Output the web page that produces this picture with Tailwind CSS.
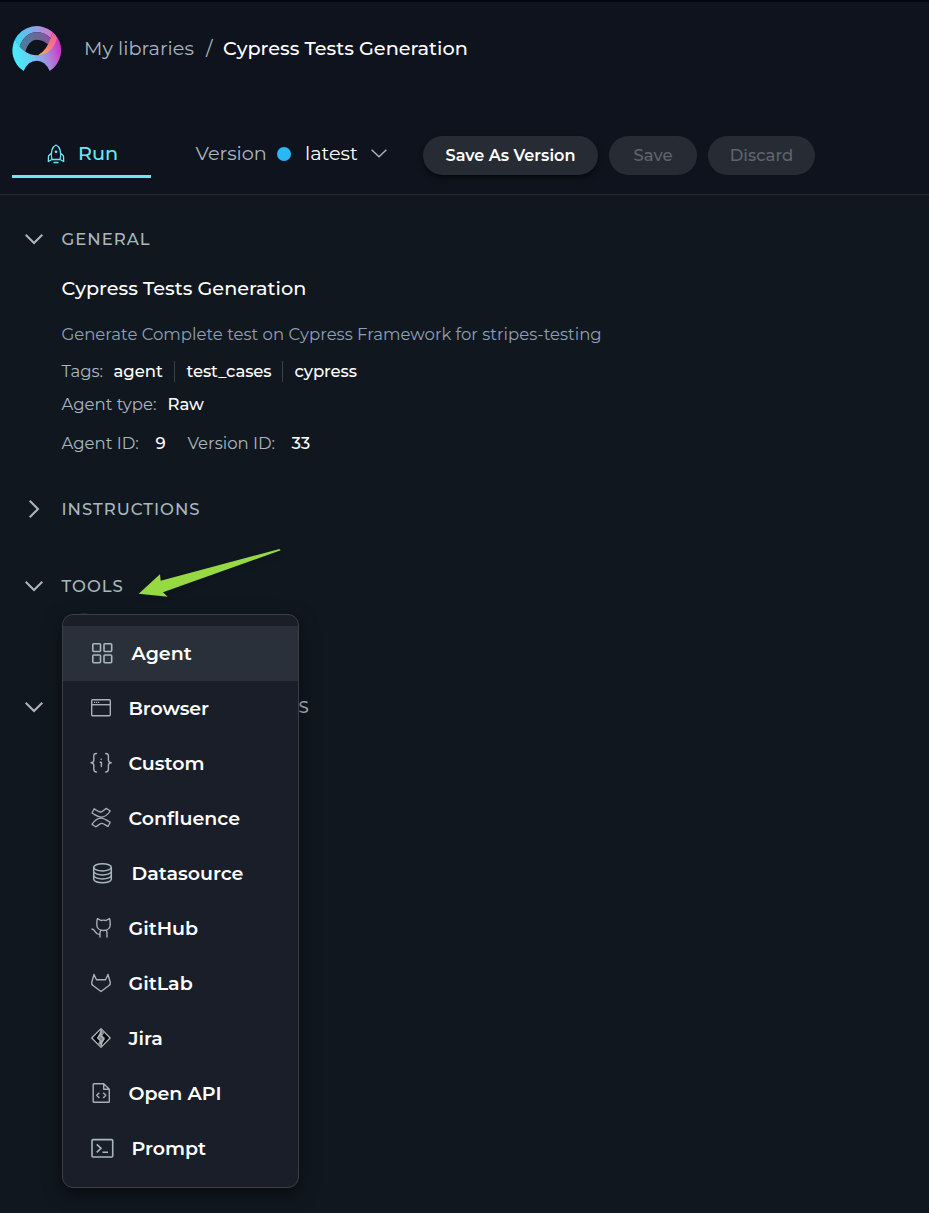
<!DOCTYPE html>
<html lang="en">
<head>
<meta charset="utf-8">
<title>Cypress Tests Generation</title>
<script src="https://cdn.jsdelivr.net/npm/@tailwindcss/browser@4"></script>
</head>
<body class="relative h-[1213px] w-[929px] overflow-hidden bg-[#10171f] font-['Montserrat','Inter',sans-serif] text-white [&_span]:inline-block [&_span]:translate-x-[0.5px]">
<header class="h-[195px] border-t-2 border-b border-t-[#020414] border-b-[#262a31] bg-[#0e131d]">
  <div class="flex h-[93px] items-center pl-3 text-[19.25px]">
    <svg class="-mt-px h-[45px] w-[49px] shrink-0" viewBox="36 78 147 135">
      <defs>
        <linearGradient id="band" x1="0" x2="1"><stop offset="0" stop-color="#35dcf4"/><stop offset=".55" stop-color="#93a0e4"/><stop offset="1" stop-color="#e070cc"/></linearGradient>
        <linearGradient id="shade" x1="0" x2="1"><stop offset="0" stop-color="#44829b"/><stop offset="1" stop-color="#87559b"/></linearGradient>
        <linearGradient id="fold" x1=".7" y1="0" x2=".2" y2="1"><stop offset="0" stop-color="#ee61a0"/><stop offset=".5" stop-color="#f4797d"/><stop offset="1" stop-color="#fbaa5c"/></linearGradient>
        <linearGradient id="base" x1="0" x2="1" y1=".6" y2=".4"><stop offset="0" stop-color="#42f0ff"/><stop offset=".35" stop-color="#67cff2"/><stop offset=".7" stop-color="#a888dc"/><stop offset="1" stop-color="#cd35c4"/></linearGradient>
      </defs>
      <path fill="url(#band)" d="M45 118A73.500 73.500 0 0 1 158 96L152 114Q134 97 110 97Q73 98 57 144Z"/>
      <path fill="url(#shade)" d="M57 144Q73 98 110 97Q134 97 152 114L151 141Q134 119 110 119Q84 120 74 162Z"/>
      <path fill="url(#fold)" d="M158 96Q170 106 174 118Q160 166 114 166Q142 149 152 114Z"/>
      <path fill="url(#base)" d="M45 118Q66 165 113 166Q158 163 172 112A73.500 73.500 0 0 1 149 213Q136 182 110 182Q84 182 71 213A73.500 73.500 0 0 1 45 118Z"/>
    </svg>
    <div class="ml-[22.500px] w-[122px] whitespace-nowrap tracking-[0.05px] text-[#a9b7c1]"><span>My libraries</span></div>
    <div class="w-[17px] text-[#a9b7c1]"><span>/</span></div>
    <div class="whitespace-nowrap font-medium"><span>Cypress Tests Generation</span></div>
  </div>
  <div class="flex h-[99px] items-start pl-3 pt-[34px]">
    <div class="flex h-[49px] w-[139px] items-center border-b-[3px] border-[#6ae8fa] pl-[35px] text-[19.25px] font-medium text-[#6ae8fa]">
      <svg class="mt-[4px] mr-[12.500px] h-5 w-[18px]" viewBox="0 0 18 20" fill="none" stroke="currentColor" stroke-width="1.300" stroke-linejoin="round" stroke-linecap="round"><path d="M5 15.500C3 8 5.500 2.500 9 1C12.500 2.500 15 8 13 15.500ZM4 9.500L1.500 12L1.300 17.500L5 15.500M14 9.500L16.500 12L16.700 17.500L13 15.500M7 18.500H11"/><circle cx="9" cy="7.800" r=".7"/></svg>
      <span class="pt-[3px]">Run</span>
    </div>
    <div class="ml-[44px] flex h-[49px] items-center text-[19.25px]">
      <div class="w-[82px] whitespace-nowrap text-[#a9b7c1]"><span>Version</span></div>
      <div class="mr-[13.500px] h-[14px] w-[14px] rounded-full bg-[#29b8f5]"></div>
      <div class="w-[66.500px]"><span>latest</span></div>
      <svg class="h-[9px] w-4" viewBox="0 0 16 9" fill="none" stroke="#a9b7c1" stroke-width="1.400"><path d="M.6.800L8 7.800L15.400.800"/></svg>
    </div>
    <div class="ml-[36px] flex gap-[11px] pt-[7px] text-[16.500px] font-medium text-[#5f646e]">
      <div class="flex h-[39px] w-[175px] items-center justify-center whitespace-nowrap rounded-full bg-[#272b33] text-[16.100px] font-semibold text-white shadow-md shadow-black/40">Save As Version</div>
      <div class="flex h-[39px] w-[88px] items-center justify-center rounded-full bg-[#272b33]">Save</div>
      <div class="flex h-[39px] w-[107px] items-center justify-center rounded-full bg-[#272b33]">Discard</div>
    </div>
  </div>
</header>
<main class="pt-6 text-[16.500px] text-[#a9b7c1]">
  <div class="flex h-10 items-center pl-[25px] font-medium tracking-[1px]">
    <svg class="mr-[18px] h-[18px] w-[18px]" viewBox="0 0 18 18" fill="none" stroke="currentColor" stroke-width="2"><path d="M.7 4.700L9 13L17.300 4.700"/></svg>
    <span>GENERAL</span>
  </div>
  <section class="whitespace-nowrap pl-[61px]">
    <div class="flex h-[58px] items-center text-[19.25px] font-medium text-white"><span>Cypress Tests Generation</span></div>
    <div class="flex h-[34px] items-center text-[#8fa0b5]"><span>Generate Complete test on Cypress Framework for stripes-testing</span></div>
    <div class="flex h-10 items-center font-medium text-white">
      <div class="w-[52px] font-normal text-[#a9b7c1]"><span>Tags:</span></div>
      <div class="w-[61px]"><span>agent</span></div>
      <div class="mr-[11px] h-[21px] w-px bg-[#3b414a]"></div>
      <div class="w-[96px] tracking-[-0.1px]"><span>test_cases</span></div>
      <div class="mr-[11px] h-[21px] w-px bg-[#3b414a]"></div>
      <span class="tracking-[-0.1px]">cypress</span>
    </div>
    <div class="flex h-[26px] items-center font-medium text-white">
      <div class="w-[106px] font-normal text-[#a9b7c1]"><span>Agent type:</span></div><span>Raw</span>
    </div>
    <div class="flex h-[52px] items-center font-medium text-white">
      <div class="w-[94px] font-normal text-[#a9b7c1]"><span>Agent ID:</span></div>
      <div class="w-[32px]"><span>9</span></div>
      <div class="w-[104px] font-normal text-[#a9b7c1]"><span>Version ID:</span></div><span>33</span>
    </div>
  </section>
  <div class="flex h-20 items-center pl-[25px] font-medium tracking-[1px]">
    <svg class="mr-[18px] h-[18px] w-[18px]" viewBox="0 0 18 18" fill="none" stroke="currentColor" stroke-width="2"><path d="M4.700.7L13 9L4.700 17.300"/></svg>
    <span>INSTRUCTIONS</span>
  </div>
  <div class="flex h-[74px] items-center pl-[25px] font-medium tracking-[1px]">
    <svg class="mr-[18px] h-[18px] w-[18px]" viewBox="0 0 18 18" fill="none" stroke="currentColor" stroke-width="2"><path d="M.7 4.700L9 13L17.300 4.700"/></svg>
    <span>TOOLS</span>
  </div>
  <div class="flex h-[168px] items-center pl-[25px] font-medium">
    <svg class="mr-[255px] h-[18px] w-[18px]" viewBox="0 0 18 18" fill="none" stroke="currentColor" stroke-width="2"><path d="M.7 4.700L9 13L17.300 4.700"/></svg>
    <span>S</span>
  </div>
</main>

<svg class="absolute left-[130px] top-[540px] h-[64px] w-[160px] drop-shadow-md" viewBox="130 540 160 64" fill="#97d942"><path d="M138.700 593.700L160 574.300L160.700 580.700L279.500 548.900L280.700 550.300L163 592.300L167.700 596.700Z"/></svg>

<div class="absolute left-[70px] top-[613px] h-7 w-7 rounded-full bg-[#292d36]"></div>
<nav class="absolute left-[62px] top-[614px] h-[574px] w-[237px] rounded-[11px] border border-[#3a3e47] bg-[#191e29] pt-[11px] text-[19px] font-semibold text-white shadow-[0_6px_18px_rgba(0,0,0,0.5)] [&_span]:translate-y-px [&_svg]:-mt-px">
  <div class="flex h-[55px] items-center bg-[#2a3039] pl-[27px]">
    <svg class="mr-[17px] h-6 w-6" viewBox="0 0 24 24" fill="none" stroke="#a9b7c1" stroke-width="1.600"><rect x="2.800" y="2.800" width="7.700" height="7.700" rx="1"/><rect x="14" y="2.800" width="7.700" height="7.700" rx="1"/><rect x="2.800" y="14" width="7.700" height="7.700" rx="1"/><rect x="14" y="14" width="7.700" height="7.700" rx="1"/></svg><span>Agent</span>
  </div>
  <div class="flex h-[55px] items-center pl-[27px]">
    <svg class="mr-[14px] h-6 w-6" viewBox="0 0 24 24" fill="none" stroke="#a9b0ba" stroke-width="1.400"><rect x="1.700" y="3.700" width="18.600" height="16" rx="1"/><path d="M2 8.700H20"/><path stroke-width="1.200" stroke-dasharray="1.200 .8" d="M4 6.300H10"/></svg><span class="tracking-[-0.1px]">Browser</span>
  </div>
  <div class="flex h-[55px] items-center pl-[27px]">
    <svg class="mr-[14px] h-6 w-6" viewBox="0 0 24 24" fill="none" stroke="#a9b0ba" stroke-width="1.400" stroke-linecap="round" stroke-linejoin="round"><path d="M6.500 2.500C4 2.500 3.800 3.500 3.800 5V9C3.800 10.700 2.500 11.700 1 11.700C2.500 11.700 3.800 12.700 3.800 14.500V18C3.800 20 4 21 6.500 21M15.700 2.500C18.200 2.500 18.400 3.500 18.400 5V9C18.400 10.700 19.700 11.700 21.200 11.700C19.700 11.700 18.400 12.700 18.400 14.500V18C18.400 20 18.200 21 15.700 21M10.200 11.300H11.400V15.500M11.200 8.200V8.400"/></svg><span>Custom</span>
  </div>
  <div class="flex h-[55px] items-center pl-[27px]">
    <svg class="mr-[14px] h-6 w-6" viewBox="0 0 24 24" fill="none" stroke="#a9b0ba" stroke-width="1.300" stroke-linejoin="round"><path d="M2 7L4.200 2.800C7 4.200 8.500 6 10.500 6C13 6 14 3.200 16.500 2.500L20.300 5C17.500 9 14.500 11.200 11 11.200C7.500 11.200 5 8.500 2 7ZM20.200 16.300L18 20.500C15.200 19.100 13.700 17.300 11.700 17.300C9.200 17.300 8.200 20.100 5.700 20.800L1.900 18.300C4.700 14.300 7.700 12.100 11.200 12.100C14.700 12.100 17.200 14.800 20.200 16.300Z"/></svg><span>Confluence</span>
  </div>
  <div class="flex h-[55px] items-center pl-[27px]">
    <svg class="mr-[17px] h-6 w-6" viewBox="0 0 24 24" fill="none" stroke="#a9b7c1" stroke-width="1.500"><ellipse cx="12.500" cy="6.300" rx="8.800" ry="3.600"/><path d="M3.700 6.300V18.200C3.700 20.200 7.600 21.800 12.500 21.800S21.300 20.200 21.300 18.200V6.300M3.700 10.300C3.700 12.300 7.600 13.900 12.500 13.900S21.300 12.300 21.300 10.300M3.700 14.300C3.700 16.300 7.600 17.900 12.500 17.900S21.300 16.300 21.300 14.300"/></svg><span>Datasource</span>
  </div>
  <div class="flex h-[55px] items-center pl-[27px]">
    <svg class="mr-[14px] h-6 w-6" viewBox="0 0 24 24" fill="none" stroke="#a9b0ba" stroke-width="1.400" stroke-linecap="round" stroke-linejoin="round"><path d="M7.500 2.600L11 4.500C12.500 4 14.500 4 16 4.500L19.500 2.600C20.500 5 20 6.500 20.200 9C20 12.500 17 14.500 13.500 14.500C10 14.500 7 12.500 6.800 9C7 6.500 6.500 5 7.500 2.600ZM10.500 14.500C9.700 16 10 18 10 21M16.500 14.500C17.200 16 17 18 17 21M10 18.300C5 19.500 6 13.500 2 13"/></svg><span>GitHub</span>
  </div>
  <div class="flex h-[55px] items-center pl-[27px]">
    <svg class="mr-[14px] h-6 w-6" viewBox="0 0 24 24" fill="none" stroke="#a9b0ba" stroke-width="1.400" stroke-linejoin="round"><path d="M4 3.500L6.500 8.700H15.500L18 3.500L20.300 11.500C20.500 13 20 13.800 19 14.500L11 20.500L3 14.500C2 13.800 1.500 13 1.700 11.500Z"/></svg><span>GitLab</span>
  </div>
  <div class="flex h-[55px] items-center pl-[27px]">
    <svg class="mr-[14px] h-6 w-6" viewBox="0 0 24 24" fill="#05070b" stroke="#b4bac2" stroke-width="1.200" stroke-linejoin="round"><path d="M11 2.700L20.200 12L11 21.300L1.700 12Z"/><path stroke="none" fill="#7d838c" d="M11 3L14.500 6.500L12.500 9.500L15 12L11 20.800L8 17.500L10 14.500L7.500 12Z"/><path fill="none" d="M11 3V7.500L7.500 11.800L10.200 14.500V18M11 7.500V10L14 13L11.500 16V20.500"/></svg><span>Jira</span>
  </div>
  <div class="flex h-[55px] items-center pl-[27px]">
    <svg class="mr-[14px] h-6 w-6" viewBox="0 0 24 24" fill="none" stroke="#a9b0ba" stroke-width="1.400" stroke-linejoin="round"><path d="M4 2.700H13.700L19.300 8.200V20.500Q19.300 21.300 18.500 21.300H4Q3.200 21.300 3.200 20.500V3.500Q3.200 2.700 4 2.700ZM13.700 2.700V8.200H19.300M9.300 11.700L6.700 14.300L9.300 16.900M13.200 11.700L15.800 14.300L13.200 16.900"/></svg><span class="whitespace-nowrap">Open API</span>
  </div>
  <div class="flex h-[55px] items-center pl-[27px]">
    <svg class="mr-[17px] h-6 w-6" viewBox="0 0 24 24" fill="none" stroke="#a9b7c1" stroke-width="1.600"><rect x="2" y="3.600" width="20.700" height="17.400" rx="1"/><path d="M6.700 8.300L11 12.300L6.700 16.300M12.500 16.300H18"/></svg><span>Prompt</span>
  </div>
</nav>
</body>
</html>
